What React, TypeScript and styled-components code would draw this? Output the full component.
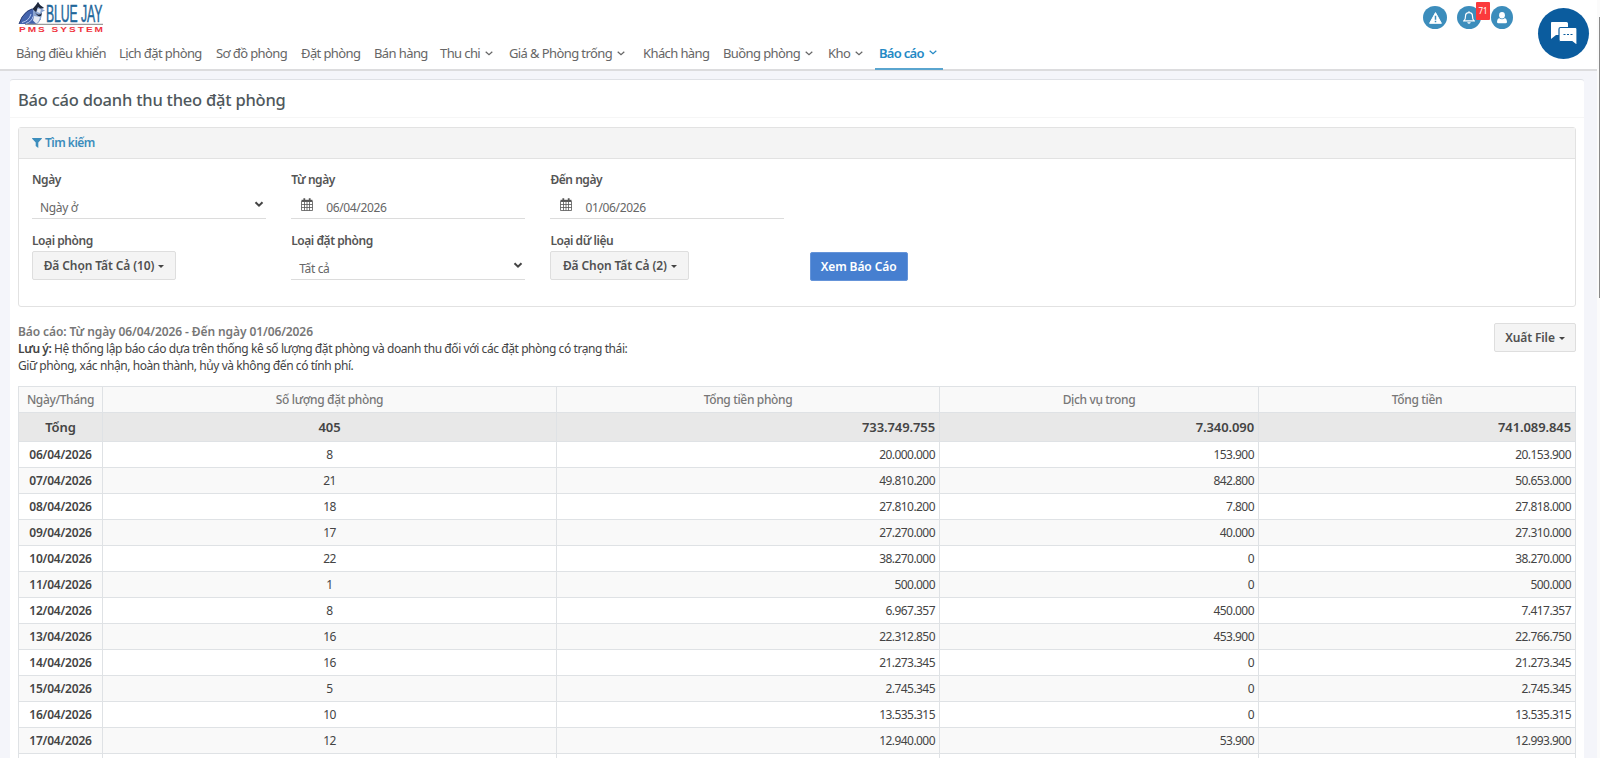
import React from "react";
import styled, { createGlobalStyle, css } from "styled-components";

const Global = createGlobalStyle`
  * { box-sizing: border-box; }
  html, body { margin: 0; height: 758px; overflow: hidden; background: #f4f5fa; }
  body { font-family: "Segoe UI", "Noto Sans", "Open Sans", sans-serif; font-size: 12px; color: #444; }
`;

const Page = styled.div`
  position: relative;
  width: 1600px;
  height: 758px;
  overflow: hidden;
  padding-right: 3px;
  background: #f4f5fa;
`;
const ScrollTrack = styled.div`
  position: absolute;
  right: 0;
  top: 0;
  width: 3px;
  height: 758px;
  background: #fbfbfb;
`;
const ScrollThumb = styled.div`
  position: absolute;
  right: 0;
  top: 17px;
  width: 1px;
  height: 281px;
  background: #8a8a8a;
`;

const Header = styled.header`
  height: 71px;
  background: #fff;
  border-bottom: 2px solid #dcdcde;
`;
const TopBar = styled.div`
  display: flex;
  justify-content: space-between;
  height: 37px;
  padding: 0 84px 0 18px;
`;
const Actions = styled.div`
  display: flex;
  gap: 10px;
  padding-top: 6px;
`;
const RoundButton = styled.div<{ $w?: number }>`
  position: relative;
  display: flex;
  align-items: center;
  justify-content: center;
  width: ${(p) => p.$w ?? 24}px;
  height: 23px;
  border-radius: 50%;
  background: #3c8dbc;
`;
const Badge = styled.span`
  position: absolute;
  left: 19px;
  top: -4px;
  width: 14px;
  height: 18px;
  border-radius: 1px;
  background: #fb3a3c;
  color: #fff;
  font-size: 8px;
  line-height: 18px;
  text-align: center;
`;
const ChatButton = styled.div`
  position: absolute;
  left: 1538px;
  top: 8px;
  width: 51px;
  height: 51px;
  border-radius: 50%;
  background: #0b5c9e;
  display: flex;
  align-items: center;
  justify-content: center;
`;

const Nav = styled.nav`
  display: flex;
  height: 34px;
  padding-left: 12px;
`;
const NavItem = styled.a<{ $w: number; $active?: boolean }>`
  display: flex;
  flex: none;
  align-items: center;
  gap: 5px;
  width: ${(p) => p.$w}px;
  height: 33px;
  padding: 0 4px 1px;
  font-size: 13px;
  letter-spacing: -0.6px;
  white-space: nowrap;
  color: #666;
  ${(p) =>
    p.$active &&
    css`
      color: #2489c5;
      font-weight: 600;
      letter-spacing: -0.7px;
      border-bottom: 2px solid #5aa5cf;
      padding-bottom: 0;
    `}
`;

const Card = styled.main`
  width: 1574px;
  height: 690px;
  margin: 8px 0 0 10px;
  background: #fff;
  border-top: 1px solid #dfe1e6;
  border-radius: 3px 3px 0 0;
`;
const Title = styled.h1`
  height: 38px;
  margin: 0;
  padding-left: 8px;
  border-bottom: 1px solid #f6f6f6;
  font-size: 16.5px;
  line-height: 40px;
  font-weight: 550;
  letter-spacing: -0.22px;
  color: #4f585c;
`;
const Content = styled.div`
  padding: 9px 8px 0;
`;
const Panel = styled.section`
  width: 1558px;
  height: 180px;
  border: 1px solid #e2e2e2;
  border-radius: 3px;
`;
const PanelHead = styled.div`
  display: flex;
  align-items: center;
  gap: 3px;
  height: 31px;
  padding: 0 0 1px 13px;
  background: #f4f4f4;
  border-bottom: 1px solid #e2e2e2;
  color: #3c8dbc;
  font-weight: 600;
  letter-spacing: -0.5px;
`;
const Fields = styled.div`
  display: grid;
  grid-template-columns: repeat(4, 234px);
  grid-template-rows: 61px 60px;
  column-gap: 25.2px;
  padding: 11px 13px;
`;
const Field = styled.div``;
const Label = styled.div`
  height: 20px;
  line-height: 20px;
  font-weight: 600;
  font-size: 12px;
  letter-spacing: -0.45px;
  color: #555;
`;
const Input = styled.div`
  display: flex;
  align-items: center;
  justify-content: space-between;
  height: 29px;
  padding: 6px 2px 0 8px;
  border-bottom: 1px solid #dcdcdc;
  letter-spacing: -0.35px;
  color: #666;
  svg { margin-top: -6px; }
`;
const DateInput = styled(Input)`
  justify-content: flex-start;
  gap: 13px;
  padding-left: 10px;
`;
const Button = styled.div<{ $w: number; $primary?: boolean }>`
  display: flex;
  align-items: center;
  justify-content: center;
  gap: 4px;
  width: ${(p) => p.$w}px;
  height: 29px;
  border: 1px solid #dedede;
  border-radius: 2px;
  background: #f4f4f4;
  font-size: 12px;
  font-weight: 600;
  letter-spacing: -0.1px;
  white-space: nowrap;
  color: #505050;
  ${(p) =>
    p.$primary &&
    css`
      margin-top: 21px;
      border-color: #6594d9;
      background: #467fd0;
      color: #fff;
    `}
`;
const Caret = styled.span`
  margin-top: 2px;
  border: 3.5px solid transparent;
  border-top-color: #444;
  border-bottom: 0;
`;

const Summary = styled.div`
  display: flex;
  justify-content: space-between;
  height: 79px;
  padding-top: 16px;
`;
const Notes = styled.div`
  font-size: 12px;
  line-height: 17px;
  letter-spacing: -0.42px;
  color: #444;
`;
const Range = styled.div`
  font-weight: 600;
  color: #777;
  letter-spacing: -0.1px;
`;
const Strong = styled.b`
  font-weight: 600;
`;

const Table = styled.div`
  width: 1558px;
  border: 1px solid #dfe2e5;
  border-bottom: 0;
`;
const Row = styled.div<{ $kind?: "head" | "total"; $odd?: boolean }>`
  display: grid;
  grid-template-columns: 84px 454px 383px 319px 316px;
  height: ${(p) => (p.$kind === "total" ? 29 : 26)}px;
  border-bottom: 1px solid #dfe2e5;
  background: ${(p) => (p.$kind === "total" ? "#e8e8e8" : p.$kind === "head" || p.$odd ? "#f9f9f9" : "#fff")};
  font-size: ${(p) => (p.$kind === "total" ? 13 : 12)}px;
  color: ${(p) => (p.$kind === "head" ? "#777" : "#444")};
  font-weight: ${(p) => (p.$kind === "total" ? 600 : p.$kind === "head" ? 500 : 400)};
  letter-spacing: ${(p) => (p.$kind === "total" ? -0.1 : p.$kind === "head" ? -0.35 : -0.55)}px;
`;
const Cell = styled.div<{ $right?: boolean; $bold?: boolean }>`
  display: flex;
  align-items: center;
  justify-content: ${(p) => (p.$right ? "flex-end" : "center")};
  padding: 0 ${(p) => (p.$right ? 4 : 0)}px 1px 0;
  border-right: 1px solid #dfe2e5;
  ${(p) =>
    p.$bold &&
    css`
      font-weight: 600;
      letter-spacing: -0.2px;
    `}
  &:last-child { border-right: 0; }
`;

const Chevron = () => (
  <svg width="8" height="5" viewBox="0 0 8 5" fill="none" stroke="currentColor" strokeWidth="1.2">
    <path d="M.7.7 4 3.8 7.3.7" />
  </svg>
);
const SelectArrow = () => (
  <svg width="10" height="7" viewBox="0 0 10 7" fill="none" stroke="#444" strokeWidth="2">
    <path d="M1.5 1.2 5 4.7 8.5 1.2" />
  </svg>
);
const CalendarIcon = () => (
  <svg width="12" height="13" viewBox="0 0 12 13" fill="none" stroke="#555">
    <path d="M.5 3.5h11v9H.5zM3.5 4v8.5M6 4v8.5M8.5 4v8.5M.5 6.5h11M.5 9.5h11" strokeWidth=".8" />
    <path d="M.5 2.8h11" strokeWidth="2" />
    <path d="M3.3.3v3M8.7.3v3" strokeWidth="1.8" />
  </svg>
);
const FilterIcon = () => (
  <svg width="10" height="10" viewBox="0 0 10 10" fill="#3c8dbc">
    <path d="M.3 0h9.4q.4.3.1.7L6.3 4.5V10L3.7 8V4.5L.2.7Q-.1.3.3 0z" />
  </svg>
);
const WarningIcon = () => (
  <svg width="13" height="12" viewBox="0 0 13 12">
    <path d="M6.5.6 12.4 11.3H.6z" fill="#fff" stroke="#fff" strokeLinejoin="round" />
    <path d="M6.5 3.7v4M6.5 8.8v1.4" stroke="#3c8dbc" strokeWidth="1.5" />
  </svg>
);
const BellIcon = () => (
  <svg width="12" height="13" viewBox="0 0 12 13" fill="none" stroke="#fff" strokeWidth="1.2">
    <path d="M1 9.8c1.4-1.1 1.5-2.4 1.5-4.6a3.5 3.5 0 0 1 7 0c0 2.2.1 3.5 1.5 4.6zM6 .2v1.5M4.6 11.4q1.4 1.4 2.8 0" />
  </svg>
);
const UserIcon = () => (
  <svg width="10" height="12" viewBox="0 0 10 12" fill="#fff">
    <ellipse cx="5" cy="3.3" rx="2.9" ry="3.2" />
    <path d="M2 6Q5 8.4 8 6q2 1 2 3.7Q10 11.3 8.6 11.3H1.4Q0 11.3 0 9.7 0 7 2 6z" />
  </svg>
);
const ChatIcon = () => (
  <svg width="28" height="24" viewBox="0 0 28 24">
    <path d="M1.5 0h15q1.5 0 1.5 1.5V13H6l-5 4V1.5Q1 0 1.5 0z" fill="#fff" />
    <path d="M10.5 5.5h15q1.5 0 1.5 1.5v16.5L22 19.5H10.5Q9 19.5 9 18V7q0-1.5 1.5-1.5z" fill="#fff" stroke="#0b5c9e" strokeWidth="1.2" />
    <path d="M13.5 12.5h2M17 12.5h2M20.5 12.5h2" stroke="#0b5c9e" strokeWidth="1.2" />
  </svg>
);
const LogoSvg = styled.svg`
  overflow: visible;
`;
const Logo = () => (
  <LogoSvg width="110" height="36" viewBox="0 0 110 36">
    <path d="M1 24C3 17 7 12 12 9.5L16 8 18 16 23 19Q21 22 18 24z" fill="#4464ad" />
    <path d="M15 9 18 5 20 2 22 5 26 8 24 9 27 10.5 24 12Q24 20 19 24L15 16z" fill="#8ba3cf" />
    <path d="M14.5 9 18 5 20 2 22 5 26 8 22.500 8.500 20 7 18 12zM17 12q3 5 7 1l-1 3q-4 1-6-4z" fill="#20283a" />
    <path d="M19.5 8.500 23 9.500 22 13 19 12zM16 16l6 1q-1 5-4 6.500l-3-3z" fill="#e4e9f3" />
    <path d="M4 22.5Q11 21 13 14M8 23.5q6-2 7-7" stroke="#b5c7ee" fill="none" strokeWidth="1" />
    <path d="M1 24 4 17 9 11.5 14 9" stroke="#26376c" fill="none" strokeWidth=".9" />
    <path d="M7 24.300H85" stroke="#9a9a9a" strokeWidth="1.3" />
    <text transform="translate(28 22) scale(.53 1)" textLength="106.500" fontFamily="Liberation Sans, sans-serif" fontSize="23" fill="#1f679b" stroke="#1f679b" strokeWidth=".5">BLUE JAY</text>
    <text transform="translate(1 31.500) scale(1.500 1)" textLength="56" fontFamily="Liberation Sans, sans-serif" fontSize="6.700" fontWeight="700" fill="#f0343d">PMS SYSTEM</text>
  </LogoSvg>
);

const NAV: [string, number, boolean?][] = [
  ["Bảng điều khiển", 103],
  ["Lịch đặt phòng", 97],
  ["Sơ đồ phòng", 85],
  ["Đặt phòng", 73],
  ["Bán hàng", 66],
  ["Thu chi", 69, true],
  ["Giá & Phòng trống", 134, true],
  ["Khách hàng", 80],
  ["Buồng phòng", 105, true],
  ["Kho", 51, true],
  ["Báo cáo", 68, true],
];

const ROWS = [
  ["06/04/2026", "8", "20.000.000", "153.900", "20.153.900"],
  ["07/04/2026", "21", "49.810.200", "842.800", "50.653.000"],
  ["08/04/2026", "18", "27.810.200", "7.800", "27.818.000"],
  ["09/04/2026", "17", "27.270.000", "40.000", "27.310.000"],
  ["10/04/2026", "22", "38.270.000", "0", "38.270.000"],
  ["11/04/2026", "1", "500.000", "0", "500.000"],
  ["12/04/2026", "8", "6.967.357", "450.000", "7.417.357"],
  ["13/04/2026", "16", "22.312.850", "453.900", "22.766.750"],
  ["14/04/2026", "16", "21.273.345", "0", "21.273.345"],
  ["15/04/2026", "5", "2.745.345", "0", "2.745.345"],
  ["16/04/2026", "10", "13.535.315", "0", "13.535.315"],
  ["17/04/2026", "12", "12.940.000", "53.900", "12.993.900"],
];

export default function App() {
  return (
    <Page>
      <Global />
      <Header>
        <TopBar>
          <Logo />
          <Actions>
            <RoundButton><WarningIcon /></RoundButton>
            <RoundButton><BellIcon /><Badge>71</Badge></RoundButton>
            <RoundButton $w={22}><UserIcon /></RoundButton>
          </Actions>
        </TopBar>
        <Nav>
          {NAV.map(([label, w, arrow]) => (
            <NavItem key={label} $w={w} $active={label === "Báo cáo"}>
              <span>{label}</span>
              {arrow && <Chevron />}
            </NavItem>
          ))}
        </Nav>
      </Header>
      <Card>
        <Title>Báo cáo doanh thu theo đặt phòng</Title>
        <Content>
          <Panel>
            <PanelHead><FilterIcon />Tìm kiếm</PanelHead>
            <Fields>
              <Field><Label>Ngày</Label><Input>Ngày ở<SelectArrow /></Input></Field>
              <Field><Label>Từ ngày</Label><DateInput><CalendarIcon />06/04/2026</DateInput></Field>
              <Field><Label>Đến ngày</Label><DateInput><CalendarIcon />01/06/2026</DateInput></Field>
              <Field />
              <Field><Label>Loại phòng</Label><Button $w={144}>Đã Chọn Tất Cả (10)<Caret /></Button></Field>
              <Field><Label>Loại đặt phòng</Label><Input>Tất cả<SelectArrow /></Input></Field>
              <Field><Label>Loại dữ liệu</Label><Button $w={139}>Đã Chọn Tất Cả (2)<Caret /></Button></Field>
              <Field><Button $w={98} $primary>Xem Báo Cáo</Button></Field>
            </Fields>
          </Panel>
          <Summary>
            <Notes>
              <Range>Báo cáo: Từ ngày 06/04/2026 - Đến ngày 01/06/2026</Range>
              <div><Strong>Lưu ý:</Strong> Hệ thống lập báo cáo dựa trên thống kê số lượng đặt phòng và doanh thu đối với các đặt phòng có trạng thái:</div>
              <div>Giữ phòng, xác nhận, hoàn thành, hủy và không đến có tính phí.</div>
            </Notes>
            <Button $w={82}>Xuất File<Caret /></Button>
          </Summary>
          <Table>
            <Row $kind="head">
              {["Ngày/Tháng", "Số lượng đặt phòng", "Tổng tiền phòng", "Dịch vụ trong", "Tổng tiền"].map((h) => (
                <Cell key={h}>{h}</Cell>
              ))}
            </Row>
            <Row $kind="total">
              {["Tổng", "405", "733.749.755", "7.340.090", "741.089.845"].map((v, i) => (
                <Cell key={i} $right={i > 1}>{v}</Cell>
              ))}
            </Row>
            {ROWS.map((r, n) => (
              <Row key={r[0]} $odd={n % 2 === 1}>
                {r.map((v, i) => (
                  <Cell key={i} $right={i > 1} $bold={i === 0}>{v}</Cell>
                ))}
              </Row>
            ))}
            <Row>
              {[0, 1, 2, 3, 4].map((i) => <Cell key={i} />)}
            </Row>
          </Table>
        </Content>
      </Card>
      <ChatButton><ChatIcon /></ChatButton>
      <ScrollTrack><ScrollThumb /></ScrollTrack>
    </Page>
  );
}
